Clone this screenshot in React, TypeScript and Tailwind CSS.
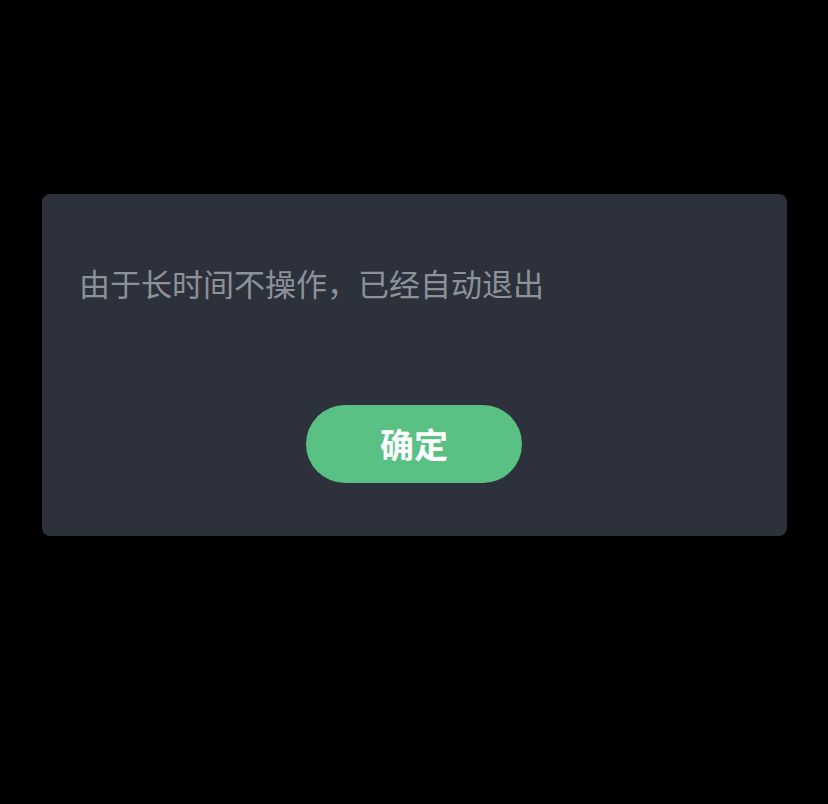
import React from "react";

export default function App() {
  return (
    <div
      className="w-[828px] h-[804px] bg-black pt-[194px] px-[42px]"
      style={{ fontFamily: '"Noto Sans CJK SC", "Noto Sans", sans-serif' }}
    >
      <div className="w-[745px] h-[342px] bg-[#2c313b] rounded-[8px] pt-[69px] px-[37px] flex flex-col">
        <p className="text-[31px] leading-[40px] text-[#8d9199]">由于长时间不操作，已经自动退出</p>
        <div className="flex justify-center mt-[102px] -ml-[37px] -mr-[37px]">
          <button className="w-[216px] h-[78px] rounded-full bg-[#5ac184] text-white text-[34px] font-bold leading-none flex items-center justify-center ml-[-1px]">
            确定
          </button>
        </div>
      </div>
    </div>
  );
}
